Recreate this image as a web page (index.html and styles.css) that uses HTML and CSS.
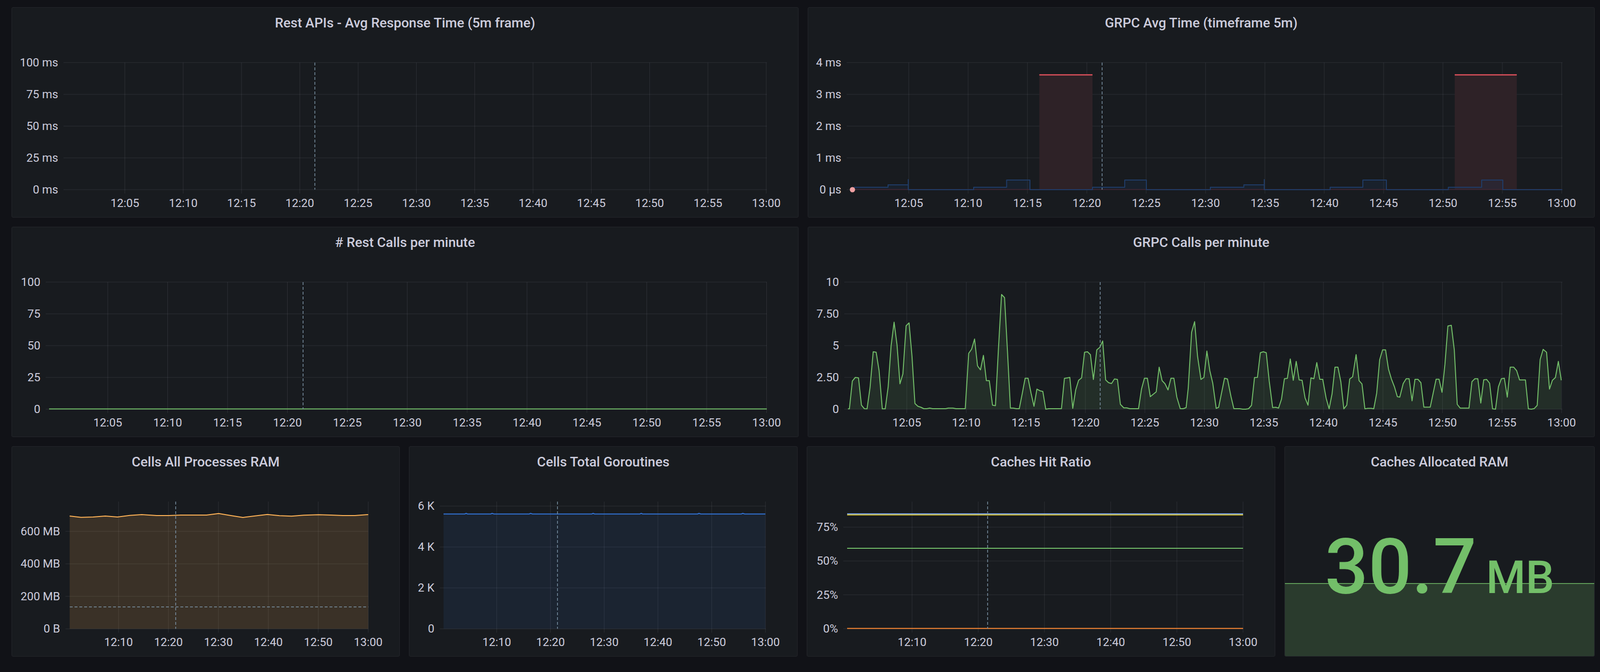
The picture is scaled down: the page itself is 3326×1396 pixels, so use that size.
FILE: index.html
```html
<!DOCTYPE html>
<html lang="en">
<head>
<meta charset="utf-8">
<title>Dashboard</title>
<link rel="stylesheet" href="styles.css">
</head>
<body>
<main class="dashboard">
  <div class="row row-2">
    <section class="panel">
      <header class="panel-title">Rest APIs - Avg Response Time (5m frame)</header>
      <svg class="chart" id="c1"></svg>
    </section>
    <section class="panel">
      <header class="panel-title">GRPC Avg Time (timeframe 5m)</header>
      <svg class="chart" id="c2"></svg>
    </section>
  </div>
  <div class="row row-2">
    <section class="panel">
      <header class="panel-title"># Rest Calls per minute</header>
      <svg class="chart" id="c3"></svg>
    </section>
    <section class="panel">
      <header class="panel-title">GRPC Calls per minute</header>
      <svg class="chart" id="c4"></svg>
    </section>
  </div>
  <div class="row row-4">
    <section class="panel">
      <header class="panel-title">Cells All Processes RAM</header>
      <svg class="chart" id="c5"></svg>
    </section>
    <section class="panel">
      <header class="panel-title">Cells Total Goroutines</header>
      <svg class="chart" id="c6"></svg>
    </section>
    <section class="panel">
      <header class="panel-title">Caches Hit Ratio</header>
      <svg class="chart" id="c7"></svg>
    </section>
    <section class="panel">
      <header class="panel-title">Caches Allocated RAM</header>
      <div class="stat-body">
        <svg class="chart" id="c8"></svg>
        <div class="stat-value">30.7<span class="unit">MB</span></div>
      </div>
    </section>
  </div>
</main>
<script src="script.js"></script>
</body>
</html>
```

FILE: styles.css
```css
html, body {
  margin: 0;
  height: 100%;
}

body {
  background: #111217;
  color: #ccccdc;
  font-family: Roboto, "Liberation Sans", sans-serif;
  overflow: hidden;
}

.dashboard {
  display: flex;
  flex-direction: column;
  gap: 19px;
  padding: 15px 0 0 24px;
}

.row {
  display: grid;
  height: 437px;
  gap: 19px;
}

.row-2 {
  grid-template-columns: 1636px 1636px;
}

.row-4 {
  grid-template-columns: 807px 808px 974px 645px;
}

.panel {
  box-sizing: border-box;
  background: #181b1f;
  border: 1px solid #24262b;
  border-radius: 3px;
  display: grid;
  grid-template-rows: 64px minmax(0, 1fr);
  overflow: hidden;
  min-width: 0;
}

.panel-title {
  font-size: 28px;
  font-weight: 500;
  line-height: 64px;
  text-align: center;
  white-space: nowrap;
  color: #ccccdc;
}

.chart {
  display: block;
  width: 100%;
  height: 100%;
}

.tick {
  font-family: Roboto, "Liberation Sans", sans-serif;
  font-size: 24px;
  fill: #ccccdc;
}

.grid {
  stroke: rgba(204, 204, 220, 0.12);
  stroke-width: 1;
  fill: none;
}

.cursor {
  stroke: #7b93a5;
  stroke-width: 1.5;
  stroke-dasharray: 6 4;
  fill: none;
}

.line {
  fill: none;
  stroke-width: 2;
  stroke-linejoin: round;
}

.green-line { stroke: #73bf69; }
.green-fill { fill: rgba(115, 191, 105, 0.12); }

.orange-line { stroke: #ffb357; }
.orange-fill { fill: rgba(255, 179, 87, 0.15); }

.blue-line { stroke: #3274d9; }
.blue-fill { fill: rgba(61, 113, 217, 0.1); }

.navy-line { stroke: #1f3c68; }
.navy-fill { fill: rgba(31, 60, 104, 0.18); }

.red-bar { fill: #2e2227; }
.red-top { stroke: #e0525d; stroke-width: 2.5; }
.red-base { stroke: #4a2329; stroke-width: 1.5; }
.red-dot { fill: #f0a0a2; }

.light-blue-line { stroke: #8ab8ff; }
.yellow-line { stroke: #fade2a; }
.deep-orange-line { stroke: #ff8a33; }

.spark-fill { fill: rgba(115, 191, 105, 0.2); }
.spark-line { stroke: #73bf69; stroke-width: 1.5; fill: none; }

.stat-body {
  display: grid;
  grid-template: minmax(0, 1fr) / minmax(0, 1fr);
  min-height: 0;
}

.stat-body > * {
  grid-area: 1 / 1;
}

.stat-value {
  align-self: center;
  justify-self: center;
  font-size: 159px;
  font-weight: 500;
  line-height: 1;
  color: #73bf69;
  white-space: nowrap;
}

.unit {
  font-size: 94px;
  margin-left: 20px;
}
```

FILE: script.js
```js
(function () {
  var NS = 'http://www.w3.org/2000/svg';

  function add(parent, tag, attrs, text) {
    var e = document.createElementNS(NS, tag);
    for (var k in attrs) e.setAttribute(k, attrs[k]);
    if (text != null) e.textContent = text;
    parent.appendChild(e);
    return e;
  }

  function setup(id) {
    var s = document.getElementById(id);
    var r = s.getBoundingClientRect();
    s.setAttribute('viewBox', r.left + ' ' + r.top + ' ' + r.width + ' ' + r.height);
    s.setAttribute('preserveAspectRatio', 'none');
    return s;
  }

  var T5 = ['12:05', '12:10', '12:15', '12:20', '12:25', '12:30', '12:35', '12:40', '12:45', '12:50', '12:55', '13:00'];
  var T10 = ['12:10', '12:20', '12:30', '12:40', '12:50', '13:00'];

  function grid(s, c) {
    var g = add(s, 'g', {});
    c.y.forEach(function (t) {
      add(g, 'line', { x1: c.L, x2: c.R, y1: t[1], y2: t[1], 'class': 'grid' });
    });
    c.xl.forEach(function (lab, i) {
      var x = c.x0 + i * c.dx;
      add(g, 'line', { x1: x, x2: x, y1: c.T, y2: c.B + 8, 'class': 'grid' });
    });
  }

  function labels(s, c) {
    var g = add(s, 'g', {});
    c.y.forEach(function (t) {
      add(g, 'text', { x: c.L - 11, y: t[1] + 8, 'text-anchor': 'end', 'class': 'tick' }, t[0]);
    });
    c.xl.forEach(function (lab, i) {
      var x = c.x0 + i * c.dx;
      add(g, 'text', { x: x, y: c.B + 36, 'text-anchor': 'middle', 'class': 'tick' }, lab);
    });
  }

  function cursor(s, c, x) {
    add(s, 'line', { x1: x, x2: x, y1: c.T, y2: c.B, 'class': 'cursor' });
  }

  function pts(arr) {
    return arr.map(function (p) { return p[0].toFixed(1) + ',' + p[1].toFixed(1); }).join(' ');
  }

  function area(s, points, base, fillCls, lineCls) {
    var first = points[0], last = points[points.length - 1];
    var d = 'M' + first[0] + ',' + base + ' L' + pts(points).split(' ').join(' L') + ' L' + last[0] + ',' + base + ' Z';
    if (fillCls) add(s, 'path', { d: d, 'class': fillCls });
    add(s, 'polyline', { points: pts(points), 'class': 'line ' + lineCls });
  }

  /* ---------- C1: Rest APIs avg ---------- */
  (function () {
    var s = setup('c1');
    var c = { L: 132, R: 1594, T: 130, B: 394, x0: 259.6, dx: 121.2, xl: T5,
      y: [['100 ms', 130], ['75 ms', 196], ['50 ms', 262], ['25 ms', 328], ['0 ms', 394]] };
    grid(s, c);
    cursor(s, c, 654.5);
    labels(s, c);
  })();

  /* ---------- C2: GRPC avg ---------- */
  (function () {
    var s = setup('c2');
    var c = { L: 1760, R: 3248, T: 130, B: 394, x0: 1889, dx: 123.4, xl: T5,
      y: [['4 ms', 130], ['3 ms', 196], ['2 ms', 262], ['1 ms', 328], ['0 \u00b5s', 394]] };
    grid(s, c);
    add(s, 'rect', { x: 2160.5, y: 155.5, width: 110.5, height: 238.5, 'class': 'red-bar' });
    add(s, 'rect', { x: 3024, y: 155.5, width: 129, height: 238.5, 'class': 'red-bar' });
    add(s, 'line', { x1: 1772, x2: 3247, y1: 393.5, y2: 393.5, 'class': 'red-base' });
    add(s, 'line', { x1: 2160.5, x2: 2271, y1: 155.5, y2: 155.5, 'class': 'red-top' });
    add(s, 'line', { x1: 3024, x2: 3153, y1: 155.5, y2: 155.5, 'class': 'red-top' });
    var step = 'H1846 V384 H1888 V373 V394 H2024 V389 H2092.5 V374 H2141 V394 H2271 V389 H2338 V374 H2383 V394 ' +
      'H2516 V389 H2585.6 V384 H2628 V373 V394 H2765 V389 H2833 V374 H2882 V394 H3010.7 V389 H3080 V374 H3124 V394 H3247.6';
    add(s, 'path', { d: 'M1775,394 V389 ' + step + ' V394 Z', 'class': 'navy-fill' });
    add(s, 'path', { d: 'M1775,389 ' + step, 'class': 'line navy-line' });
    add(s, 'circle', { cx: 1772, cy: 394, r: 5.5, 'class': 'red-dot' });
    cursor(s, c, 2291);
    labels(s, c);
  })();

  /* ---------- C3: Rest calls ---------- */
  (function () {
    var s = setup('c3');
    var c = { L: 95, R: 1594, T: 586, B: 850, x0: 224, dx: 124.5, xl: T5,
      y: [['100', 586], ['75', 652], ['50', 718], ['25', 784], ['0', 850]] };
    grid(s, c);
    add(s, 'line', { x1: 102, x2: 1594, y1: 849.5, y2: 849.5, 'class': 'line green-line' });
    cursor(s, c, 630);
    labels(s, c);
  })();

  /* ---------- C4: GRPC calls ---------- */
  (function () {
    var s = setup('c4');
    var c = { L: 1755, R: 3248, T: 586, B: 850, x0: 1885, dx: 123.73, xl: T5,
      y: [['10', 586], ['7.50', 652], ['5', 718], ['2.50', 784], ['0', 850]] };
    grid(s, c);
    var z6 = [162,928,168,928,180,755,192,732,205,735,217,905,229,927,240,928,252,795,265,572,277,575,289,690,302,928,314,928,
      326,790,338,535,350,388,362,530,374,772,386,710,399,410,411,392,423,600,435,895,447,912,459,918,471,927,483,927,495,923,
      507,927,560,927,571,923,590,923,602,927,640,927,654,582,666,556,678,493,690,660,702,685,714,595,726,752,738,752,751,905,
      763,908,775,560,788,215,800,235,812,570,824,923,836,923,848,927,860,927,872,835,884,737,896,737,908,830,920,912,932,805,
      944,815,956,820,968,930,980,927,1032,927,1044,738,1056,735,1066,732,1078,925,1090,810,1102,750,1114,735,1126,575,1138,572,
      1150,590,1162,745,1176,560,1188,545,1200,505,1212,748,1224,765,1236,770,1248,742,1260,745,1272,900,1286,922,1298,922,
      1310,927,1346,927,1358,805,1370,737,1382,737,1394,852,1406,837,1418,822,1430,668,1442,752,1454,772,1466,810,1478,737,
      1490,737,1502,855,1516,927,1528,927,1540,920];
    var z7 = [0,800,14,450,26,385,38,600,52,745,64,732,76,568,88,690,100,768,114,925,124,918,148,737,160,742,174,850,186,927,
      210,927,222,930,234,930,246,927,258,906,270,733,282,732,294,578,306,572,318,578,330,755,344,920,356,918,368,923,380,868,
      392,740,404,738,416,617,428,750,440,632,452,748,464,750,476,860,488,905,500,735,512,740,524,640,536,744,548,744,562,862,
      574,928,586,835,598,668,610,668,622,760,634,928,646,905,658,742,670,728,684,590,696,752,708,773,720,928,732,925,746,925,
      756,928,768,830,780,622,792,560,804,560,816,680,828,742,840,790,852,852,862,855,876,770,888,740,900,740,912,878,924,744,
      936,744,948,765,960,917,986,917,998,830,1010,743,1022,743,1034,825,1046,650,1058,412,1072,407,1084,560,1096,900,1108,923,
      1144,923,1156,758,1168,740,1180,740,1192,892,1204,747,1216,745,1228,768,1240,928,1252,930,1264,790,1276,740,1288,737,
      1300,855,1312,668,1326,668,1338,690,1350,748,1362,748,1374,748,1386,928,1398,930,1410,926,1422,906,1434,620,1446,557,
      1460,575,1472,805,1484,750,1496,733,1508,632,1520,750];
    var P = [], i;
    for (i = 0; i < z6.length; i += 2) P.push([z6[i] / 1.96 + 1680, Math.min(z6[i + 1] / 3 + 540, 850)]);
    for (i = 0; i < z7.length; i += 2) P.push([z7[i] / 1.96 + 2470, Math.min(z7[i + 1] / 3 + 540, 850)]);
    area(s, P, 850, 'green-fill', 'green-line');
    cursor(s, c, 2287);
    labels(s, c);
  })();

  /* ---------- C5: Cells RAM ---------- */
  (function () {
    var s = setup('c5');
    var c = { L: 136, R: 765.5, T: 1042, B: 1306.3, x0: 246.4, dx: 103.8, xl: T10,
      y: [['600 MB', 1103.8], ['400 MB', 1171.3], ['200 MB', 1238.8], ['0 B', 1306.3]] };
    grid(s, c);
    var P = [[144.8,1072],[168.4,1074.7],[193.6,1074],[218.9,1072],[244.1,1074],[269.4,1070.7],[294.6,1069],[325.5,1071],
      [350.7,1071],[376,1070],[429.3,1070],[454.5,1066.7],[479.8,1071],[505,1075],[530.3,1071.7],[555.6,1068.7],[580.8,1071.3],
      [606,1072.3],[631.3,1070.3],[662.2,1069.3],[687.4,1070],[712.7,1071],[737.9,1071],[765.4,1069]];
    area(s, P, 1306.3, 'orange-fill', 'orange-line');
    add(s, 'line', { x1: 145, x2: 765.5, y1: 1260.7, y2: 1260.7, 'class': 'cursor' });
    cursor(s, c, 365.3);
    labels(s, c);
  })();

  /* ---------- C6: Goroutines ---------- */
  (function () {
    var s = setup('c6');
    var c = { L: 914, R: 1592, T: 1042, B: 1306.3, x0: 1032.6, dx: 111.7, xl: T10,
      y: [['6 K', 1051.3], ['4 K', 1136.3], ['2 K', 1221.3], ['0', 1306.3]] };
    grid(s, c);
    var P = [[922,1067.7],[966,1067.7],[969,1066.5],[972,1067.7],[1020,1067.7],[1023,1066.5],[1027,1067.7],[1100,1067.7],
      [1103,1066.5],[1107,1067.7],[1230,1067.7],[1233,1066.5],[1236,1067.7],[1330,1067.7],[1333,1066.5],[1336,1067.7],
      [1450,1067.7],[1453,1066.5],[1457,1067.7],[1541,1067.7],[1544,1066.5],[1548,1067.7],[1591,1067.7]];
    area(s, P, 1306.3, 'blue-fill', 'blue-line');
    cursor(s, c, 1158.8);
    labels(s, c);
  })();

  /* ---------- C7: Cache hit ratio ---------- */
  (function () {
    var s = setup('c7');
    var c = { L: 1753, R: 2585, T: 1042, B: 1306, x0: 1896, dx: 137.6, xl: T10,
      y: [['75%', 1095.1], ['50%', 1165.4], ['25%', 1235.7], ['0%', 1306]] };
    grid(s, c);
    add(s, 'line', { x1: 1761, x2: 2584, y1: 1069.6, y2: 1069.6, 'class': 'line yellow-line' });
    add(s, 'line', { x1: 1761, x2: 2584, y1: 1067.4, y2: 1067.4, 'class': 'line light-blue-line' });
    add(s, 'line', { x1: 1761, x2: 2584, y1: 1139, y2: 1139, 'class': 'line green-line' });
    add(s, 'line', { x1: 1761, x2: 2584, y1: 1305.5, y2: 1305.5, 'class': 'line deep-orange-line' });
    cursor(s, c, 2053);
    labels(s, c);
  })();

  /* ---------- C8: stat sparkline ---------- */
  (function () {
    var s = setup('c8');
    add(s, 'rect', { x: 2660, y: 1212.3, width: 700, height: 200, 'class': 'spark-fill' });
    add(s, 'line', { x1: 2660, x2: 3330, y1: 1212.3, y2: 1212.3, 'class': 'spark-line' });
  })();
})();
```
